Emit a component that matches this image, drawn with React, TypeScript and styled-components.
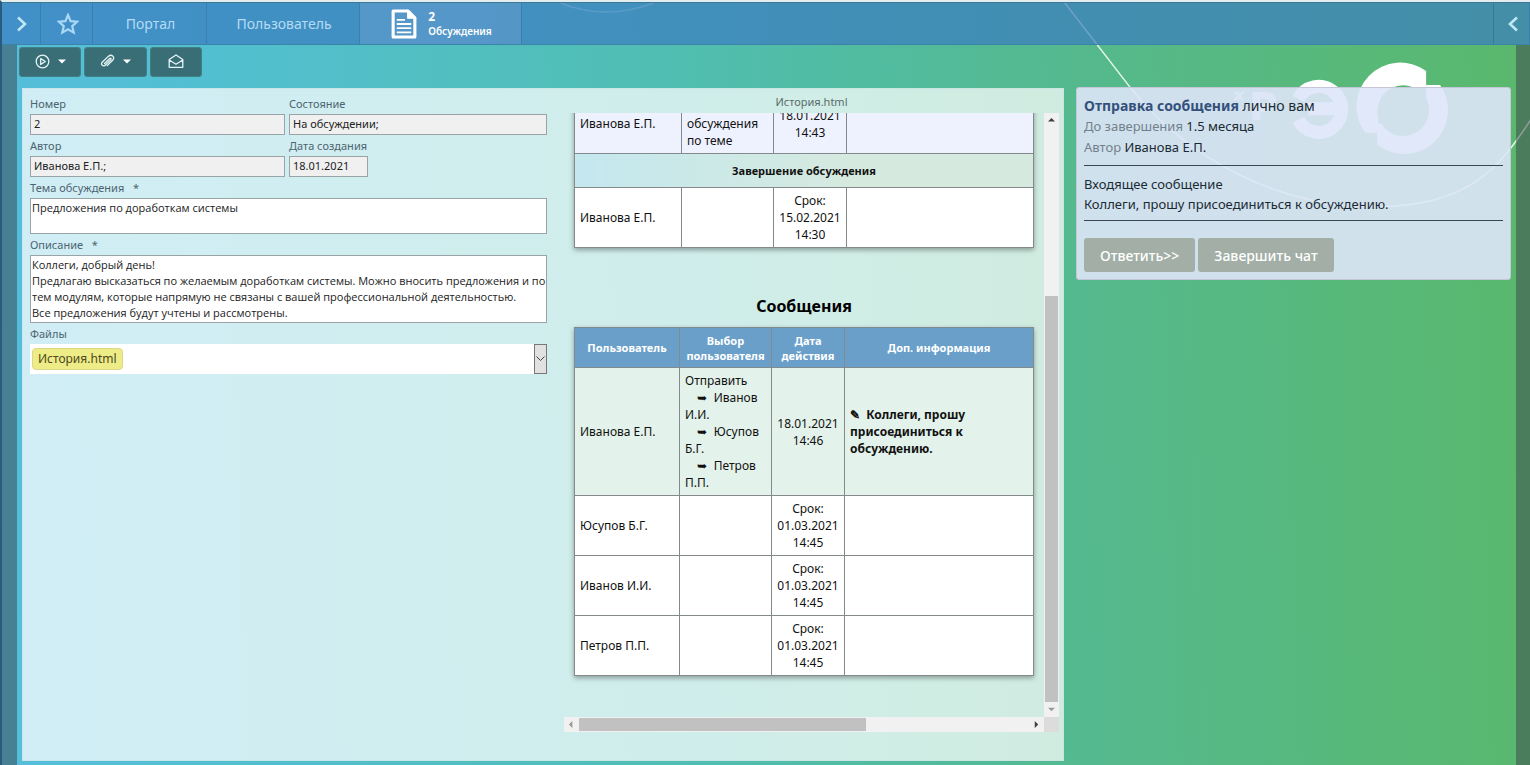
import React from 'react';
import styled, { createGlobalStyle, css } from 'styled-components';

const Global = createGlobalStyle`
  *, *::before, *::after { box-sizing: border-box; }
  body { margin: 0; font-family: "Noto Sans", "Open Sans", sans-serif; color: #111; }
  button, input, textarea, select { font: inherit; color: inherit; margin: 0; }
  button { cursor: pointer; border: 0; padding: 0; }
`;

const Page = styled.div`
  position: relative;
  min-height: 100vh;
  display: flex;
  flex-direction: column;
  border-left: 2px solid #2a5b7c;
  border-top: 2px solid #e3edf0;
  background: linear-gradient(88deg, #55bedc 0%, #52bfd0 16%, #50beb0 46%, #54b98e 70%, #5ab86c 100%);
  overflow: hidden;
`;

const Backdrop = styled.svg`
  position: absolute;
  inset: 0;
  width: 100%;
  height: 100%;
`;

const Header = styled.header`
  position: relative;
  display: flex;
  height: 43px;
  background: rgba(59, 124, 192, 0.7);
  border-top: 1px solid #3c7a94;
  border-bottom: 1px solid #3b83a8;
`;

const HeaderButton = styled.button<{ $width: number; $active?: boolean }>`
  display: flex;
  align-items: center;
  justify-content: center;
  gap: 11px;
  width: ${p => p.$width}px;
  padding-left: 2px;
  color: #b4dcf5;
  font-size: 14px;
  background: ${p => (p.$active ? 'rgba(130, 170, 220, 0.3)' : 'none')};
  border-right: 1px solid #3a7fae;
`;

const ActiveLabel = styled.span`
  display: flex;
  flex-direction: column;
  align-items: flex-start;
  padding-top: 2px;
  color: #fff;
  font-size: 10px;
  line-height: 15px;
  font-weight: 600;
`;

const Count = styled.span`
  font-size: 12px;
  line-height: 14px;
  font-weight: 700;
`;

const Spacer = styled.span`
  flex: 1;
  border-right: 1px solid #357a9c;
`;

const Body = styled.div`
  position: relative;
  flex: 1;
  display: flex;
  border-left: 15px solid rgba(60, 65, 75, 0.5);
  border-right: 14px solid rgba(60, 65, 75, 0.5);
`;

const Main = styled.main`
  flex: 1;
  min-width: 0;
  display: flex;
  flex-direction: column;
`;

const Toolbar = styled.div`
  display: flex;
  gap: 3px;
  padding: 2px 2px 0;
  height: 43px;
`;

const Tool = styled.button<{ $width: number }>`
  display: flex;
  align-items: center;
  justify-content: center;
  gap: 8px;
  width: ${p => p.$width}px;
  height: 30px;
  padding-bottom: 2px;
  border-radius: 3px;
  border: 1px solid #3f8085;
  background: #3a6e76;
  color: #e6f5f5;
`;

const Columns = styled.div`
  flex: 1;
  display: grid;
  grid-template-columns: minmax(0, 1fr) 435px;
  gap: 12px;
  padding: 0 5px 4px;
  align-items: start;
`;

const Card = styled.section`
  display: grid;
  grid-template-columns: 517px minmax(0, 1fr);
  gap: 17px;
  min-height: 673px;
  padding: 4px 4px 28px 7px;
  border: 1px solid rgba(200, 225, 225, 0.6);
  background: rgba(255, 255, 255, 0.73);
`;

const Form = styled.form`
  display: grid;
  grid-template-columns: 255px 258px;
  column-gap: 4px;
  align-content: start;
`;

const Field = styled.div<{ $wide?: boolean }>`
  display: flex;
  flex-direction: column;
  align-items: flex-start;
  font-size: 11px;
  ${p => p.$wide && css`grid-column: 1 / -1;`}
`;

const Label = styled.label`
  height: 21px;
  line-height: 21px;
  color: #4d6470;
  white-space: pre;
`;

const Input = styled.input<{ $short?: boolean }>`
  width: ${p => (p.$short ? '79px' : '100%')};
  height: 21px;
  padding: 0 3px 2px;
  border: 1px solid #9aa3a5;
  background: #f0f0f0;
  color: #222;
`;

const Area = styled.textarea<{ $height: number }>`
  display: block;
  width: 100%;
  height: ${p => p.$height}px;
  padding: 1px 0 1px 1px;
  font-family: "Open Sans", "Noto Sans", sans-serif;
  line-height: 16px;
  white-space: pre;
  border: 1px solid #9aa3a5;
  background: #fff;
  color: #222;
  resize: none;
  overflow: hidden;
`;

const FileBox = styled.div`
  display: flex;
  justify-content: space-between;
  align-items: center;
  width: 100%;
  height: 30px;
  padding-left: 2px;
  background: #fff;
`;

const FileTag = styled.button`
  height: 22px;
  padding: 0 5px;
  border: 1px solid #dcd888;
  border-radius: 4px;
  background: #eeec86;
  color: #4c4a20;
  font-size: 12px;
  line-height: 20px;
`;

const FileMenu = styled.button`
  display: flex;
  align-items: center;
  justify-content: center;
  width: 13px;
  height: 30px;
  border: 1px solid #777;
  background: #e1e1e1;
  color: #444;
`;

const Viewer = styled.div`
  display: flex;
  flex-direction: column;
`;

const ViewerTitle = styled.div`
  height: 20px;
  line-height: 18px;
  font-size: 11px;
  text-align: center;
  color: #5b6b6b;
`;

const Frame = styled.div`
  height: 619px;
  display: grid;
  grid-template-columns: minmax(0, 1fr) 15px;
  grid-template-rows: minmax(0, 1fr) 15px;
`;

const Viewport = styled.div`
  display: flex;
  flex-direction: column;
  justify-content: flex-end;
  overflow: hidden;
  padding: 0 10px 41px;
`;

const Title = styled.h2`
  margin: 45px 0 8px;
  font-size: 16px;
  line-height: 26px;
  text-align: center;
  color: #000;
`;

const Table = styled.table`
  flex: none;
  width: 100%;
  table-layout: fixed;
  border-collapse: collapse;
  font-size: 12px;
  line-height: 17px;
  background: #fff;
  box-shadow: 0 2px 5px rgba(0, 0, 0, 0.35);
`;

const Th = styled.th`
  height: 40px;
  padding: 4px 2px;
  border: 1px solid #7f8b8f;
  background: #6a9fca;
  color: #fff;
  font-size: 11px;
  line-height: 15px;
`;

const Row = styled.tr<{ $tone?: string }>`
  background: ${p => p.$tone || '#fff'};
`;

const Td = styled.td<{ $center?: boolean; $bold?: boolean }>`
  padding: ${p => (p.$center ? '4px' : '4px 2px 4px 5px')};
  border: 1px solid #84898c;
  text-align: ${p => (p.$center ? 'center' : 'left')};
  font-weight: ${p => (p.$bold ? 700 : 400)};
`;

const SectionCell = styled.td`
  height: 34px;
  border: 1px solid #84898c;
  background: linear-gradient(90deg, #c4e8ef, #d5e9df 60%, #d5e9df);
  text-align: center;
  font-size: 11px;
  font-weight: 700;
`;

const Bar = styled.div<{ $vertical?: boolean }>`
  display: flex;
  flex-direction: ${p => (p.$vertical ? 'column' : 'row')};
  background: #f1f1f1;
`;

const BarArrow = styled.button<{ $dim?: boolean }>`
  flex: none;
  display: flex;
  align-items: center;
  justify-content: center;
  width: 15px;
  height: 15px;
  background: none;
  color: ${p => (p.$dim ? '#9a9a9a' : '#404040')};
`;

const Track = styled.div<{ $before: number; $thumb: number; $after: number; $vertical?: boolean }>`
  flex: 1;
  display: grid;
  ${p => {
    const tracks = `${p.$before}fr ${p.$thumb}fr ${p.$after}fr`;
    return p.$vertical
      ? css`grid-template-rows: ${tracks}; padding: 0 1px;`
      : css`grid-template-columns: ${tracks}; padding: 1px 0;`;
  }}
`;

const Thumb = styled.div<{ $vertical?: boolean }>`
  background: #c1c1c1;
  ${p => (p.$vertical ? css`grid-row: 2;` : css`grid-column: 2;`)}
`;

const Corner = styled.div`
  background: #dcdcdc;
`;

const Message = styled.aside`
  margin-top: -1px;
  padding: 7px;
  border: 1px solid #c5c6d6;
  border-radius: 3px;
  background: rgba(222, 229, 248, 0.9);
  font-size: 13px;
  line-height: 21px;
  color: #1b2a33;
`;

const Line = styled.div<{ $lead?: boolean }>`
  font-size: ${p => (p.$lead ? 14 : 13)}px;
  b { color: #34507c; }
  span { color: #73808c; }
`;

const Content = styled.div`
  margin: 7px 0 17px;
  padding: 8px 0 6px;
  border-top: 1px solid #3c4650;
  border-bottom: 1px solid #3c4650;
  line-height: 20px;
`;

const Actions = styled.div`
  display: flex;
  gap: 3px;
`;

const Action = styled.button`
  height: 34px;
  padding: 0 16px;
  border-radius: 3px;
  background: #a2aea6;
  color: #fff;
  font-size: 14px;
  font-weight: 500;
`;

const Chevron = ({ dir }: { dir: 'left' | 'right' }) => (
  <svg width="12" height="18" viewBox="0 0 12 18" fill="none" stroke="#c0e6f5" strokeWidth="2.6">
    <path d={dir === 'right' ? 'M2 2.5 9 9 2 15.5' : 'M10 2.5 3 9l7 6.5'} />
  </svg>
);

const Caret = () => (
  <svg width="8" height="5" viewBox="0 0 8 5"><path d="M0 .5h8L4 4.5z" fill="#fff" /></svg>
);

const arrows = { up: 'M0 5h8L4 1z', down: 'M0 2h8L4 6z', left: 'M5 0v8L1 4z', right: 'M2 0v8l4-4z' };
const Arrow = ({ dir }: { dir: keyof typeof arrows }) => (
  <svg width="7" height="7" viewBox="0 0 8 8"><path d={arrows[dir]} fill="currentColor" /></svg>
);

const waiting = ['Юсупов Б.Г.', 'Иванов И.И.', 'Петров П.П.'];
const recipients = ['Иванов И.И.', 'Юсупов Б.Г.', 'Петров П.П.'];
const indent = '\u00a0'.repeat(4);

const description = [
  'Коллеги, добрый день!',
  'Предлагаю высказаться по желаемым доработкам системы. Можно вносить предложения и по',
  'тем модулям, которые напрямую не связаны с вашей профессиональной деятельностью.',
  'Все предложения будут учтены и рассмотрены.',
].join('\n');

export default function App() {
  return (
    <>
      <Global />
      <Page>
        <Backdrop viewBox="0 0 1530 765" preserveAspectRatio="xMaxYMin slice" aria-hidden="true">
          <g fill="none" stroke="#e6f7ec" strokeWidth="1.5">
            <path d="M552 -2q52 24 108 0" opacity=".6" />
            <path d="M1062 -2 1130 86C1190 160 1280 205 1375 205S1500 165 1532 116" />
          </g>
          <g fill="#fff">
            <path d="M1298 97a23 23 0 1 1 0 21M1308 107h28" fill="none" stroke="#fff" strokeWidth="13" />
            <path d="M1426 69V85H1412A26 26 0 0 0 1378 116V131H1365A44 44 0 0 1 1426 69Z" />
            <path d="M1426 96V83H1440A44 44 0 0 1 1377 143V122H1381A26 26 0 0 0 1426 96Z" />
            <g opacity=".7">
              <path fillRule="evenodd" d="M1252 90h14a10 10 0 0 1 0 20h-6v8h-8zM1260 97v6h5a3 3 0 0 0 0-6z" />
              <path d="m1234 90 9 8m0-8-9 8m4-9v10" stroke="#fff" strokeWidth="2" />
            </g>
          </g>
        </Backdrop>

        <Header>
          <HeaderButton $width={39} aria-label="Развернуть"><Chevron dir="right" /></HeaderButton>
          <HeaderButton $width={52} aria-label="Избранное">
            <svg width="22" height="22" viewBox="0 0 22 22" fill="none" stroke="#a9d8f5" strokeWidth="2.2">
              <path d="m11 2 2.6 6.1 6.6.6-5 4.4 1.5 6.5L11 16.2l-5.7 3.4 1.5-6.5-5-4.4 6.6-.6z" />
            </svg>
          </HeaderButton>
          <HeaderButton $width={114}>Портал</HeaderButton>
          <HeaderButton $width={153}>Пользователь</HeaderButton>
          <HeaderButton $width={162} $active>
            <svg width="26" height="30" viewBox="0 0 25 29" fill="none" stroke="#fff">
              <path strokeWidth="3" strokeLinejoin="round" d="M2 2h14.500L23 8.500V27H2z" />
              <path strokeWidth="1" fill="#fff" d="M16 1.500v7.500h7.500z" />
              <path strokeWidth="1.700" d="M5.500 10.500h8M5.500 14.500h14M5.500 18.500h14M5.500 22.500h14" />
            </svg>
            <ActiveLabel><Count>2</Count><span>Обсуждения</span></ActiveLabel>
          </HeaderButton>
          <Spacer />
          <HeaderButton $width={36} aria-label="Свернуть"><Chevron dir="left" /></HeaderButton>
        </Header>

        <Body>
          <Main>
            <Toolbar>
              <Tool $width={62} aria-label="Запуск">
                <svg width="15" height="15" viewBox="0 0 15 15" fill="none" stroke="currentColor" strokeWidth="1.300">
                  <circle cx="7.500" cy="7.500" r="6.300" /><path strokeLinejoin="round" d="M5.700 4.600v5.800l4.600-2.900z" />
                </svg>
                <Caret />
              </Tool>
              <Tool $width={63} aria-label="Вложения">
                <svg width="15" height="15" viewBox="0 0 15 15" fill="none" stroke="currentColor" strokeWidth="1.300" strokeLinecap="round">
                  <path d="m4.500 9.500 5-4.800c1-1 2.200.2 1.200 1.200l-5.500 5.300C3.300 13 .2 10.600 2.200 8.300L8.300 2.400C11.500-.4 15.400 3 12.600 6.200l-5.400 5.400" />
                </svg>
                <Caret />
              </Tool>
              <Tool $width={52} aria-label="Сообщение">
                <svg width="16" height="15" viewBox="0 0 16 15" fill="none" stroke="currentColor" strokeWidth="1.300" strokeLinejoin="round">
                  <path d="M1.200 5.500 8 1l6.800 4.500v7.800H1.200zM1.200 6 8 10.200 14.800 6" />
                </svg>
              </Tool>
            </Toolbar>

            <Columns>
              <Card>
                <Form onSubmit={e => e.preventDefault()}>
                  <Field><Label htmlFor="num">Номер</Label><Input id="num" readOnly value="2" /></Field>
                  <Field><Label htmlFor="state">Состояние</Label><Input id="state" readOnly value="На обсуждении;" /></Field>
                  <Field><Label htmlFor="author">Автор</Label><Input id="author" readOnly value="Иванова Е.П.;" /></Field>
                  <Field><Label htmlFor="date">Дата создания</Label><Input id="date" $short readOnly value="18.01.2021" /></Field>
                  <Field $wide>
                    <Label htmlFor="topic">{'Тема обсуждения   *'}</Label>
                    <Area id="topic" $height={36} defaultValue="Предложения по доработкам системы" />
                  </Field>
                  <Field $wide>
                    <Label htmlFor="about">{'Описание   *'}</Label>
                    <Area id="about" $height={68} defaultValue={description} />
                  </Field>
                  <Field $wide>
                    <Label as="span">Файлы</Label>
                    <FileBox>
                      <FileTag type="button">История.html</FileTag>
                      <FileMenu type="button" aria-label="Список файлов">
                        <svg width="9" height="6" viewBox="0 0 9 6" fill="none" stroke="currentColor"><path d="m.5.5 4 4 4-4" /></svg>
                      </FileMenu>
                    </FileBox>
                  </Field>
                </Form>

                <Viewer>
                  <ViewerTitle>История.html</ViewerTitle>
                  <Frame>
                    <Viewport>
                      <Table>
                        <colgroup><col width="107" /><col width="92" /><col width="73" /><col /></colgroup>
                        <tbody>
                          <Row $tone="#eef2fe">
                            <Td>Иванова Е.П.</Td>
                            <Td>Начало<br />обсуждения<br />по теме</Td>
                            <Td $center>18.01.2021<br />14:43</Td>
                            <Td />
                          </Row>
                          <tr><SectionCell colSpan={4}>Завершение обсуждения</SectionCell></tr>
                          <Row>
                            <Td>Иванова Е.П.</Td>
                            <Td />
                            <Td $center>Срок:<br />15.02.2021<br />14:30</Td>
                            <Td />
                          </Row>
                        </tbody>
                      </Table>
                      <Title>Сообщения</Title>
                      <Table>
                        <colgroup><col width="105" /><col width="92" /><col width="73" /><col /></colgroup>
                        <thead>
                          <tr>
                            <Th>Пользователь</Th>
                            <Th>Выбор пользователя</Th>
                            <Th>Дата действия</Th>
                            <Th>Доп. информация</Th>
                          </tr>
                        </thead>
                        <tbody>
                          <Row $tone="#e3f2ea">
                            <Td>Иванова Е.П.</Td>
                            <Td>
                              Отправить
                              {recipients.map(r => (
                                <React.Fragment key={r}><br />{`${indent}➥\u00a0 ${r}`}</React.Fragment>
                              ))}
                            </Td>
                            <Td $center>18.01.2021<br />14:46</Td>
                            <Td $bold>{'✎\u00a0 Коллеги, прошу'}<br />присоединиться к<br />обсуждению.</Td>
                          </Row>
                          {waiting.map(name => (
                            <Row key={name}>
                              <Td>{name}</Td>
                              <Td />
                              <Td $center>Срок:<br />01.03.2021<br />14:45</Td>
                              <Td />
                            </Row>
                          ))}
                        </tbody>
                      </Table>
                    </Viewport>
                    <Bar $vertical>
                      <BarArrow aria-label="Вверх"><Arrow dir="up" /></BarArrow>
                      <Track $vertical $before={168} $thumb={406} $after={0}><Thumb $vertical /></Track>
                      <BarArrow $dim aria-label="Вниз"><Arrow dir="down" /></BarArrow>
                    </Bar>
                    <Bar>
                      <BarArrow $dim aria-label="Влево"><Arrow dir="left" /></BarArrow>
                      <Track $before={0} $thumb={286} $after={162}><Thumb /></Track>
                      <BarArrow aria-label="Вправо"><Arrow dir="right" /></BarArrow>
                    </Bar>
                    <Corner />
                  </Frame>
                </Viewer>
              </Card>

              <Message>
                <Line $lead><b>Отправка сообщения</b> лично вам</Line>
                <Line><span>До завершения</span> 1.5 месяца</Line>
                <Line><span>Автор</span> Иванова Е.П.</Line>
                <Content>
                  <div>Входящее сообщение</div>
                  <div>Коллеги, прошу присоединиться к обсуждению.</div>
                </Content>
                <Actions>
                  <Action>Ответить&gt;&gt;</Action>
                  <Action>Завершить чат</Action>
                </Actions>
              </Message>
            </Columns>
          </Main>
        </Body>
      </Page>
    </>
  );
}
